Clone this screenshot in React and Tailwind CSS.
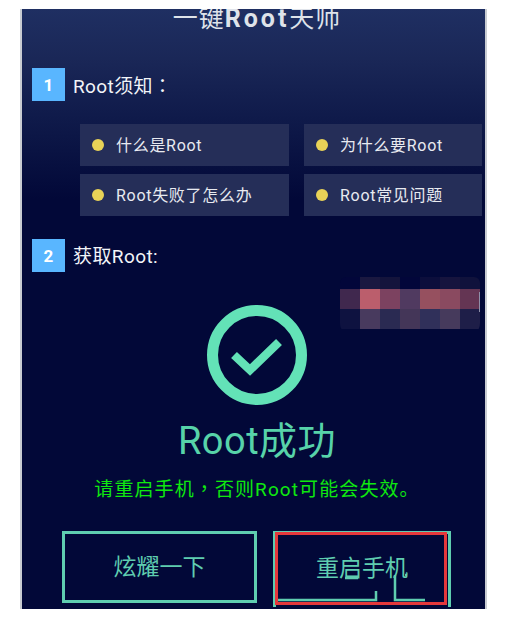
const font = { fontFamily: '"Roboto", "Noto Sans CJK SC", sans-serif' }

const questions = ["什么是Root", "为什么要Root", "Root失败了怎么办", "Root常见问题"]

const mosaic = [
  ["#02063a", "#1a1840", "#14143c", "#02063a", "#0c0e3c", "#16143e", "#10123c"],
  ["#40284e", "#bb5e6c", "#7c4260", "#503a60", "#96505f", "#8a4a60", "#643553"],
  ["#0e1240", "#483a5e", "#2a2a52", "#443658", "#30305a", "#463a5c", "#1e1e48"],
]

function Step({ n, children }) {
  return (
    <div className="flex items-center h-[33px]">
      <div className="w-[33px] h-[33px] pt-[3px] bg-[#59b6ff] text-white font-bold text-[17px] flex items-center justify-center">{n}</div>
      <div className="ml-[8px] pt-[3px] text-[19px] tracking-[0.4px] text-[#f2f4f8]">{children}</div>
    </div>
  )
}

export default function App() {
  return (
    <div className="w-[508px] h-[619px] bg-white pt-[9px] overflow-hidden" style={font}>
      <div className="relative ml-[20px] w-[467px] h-[600px] border-x-2 border-[#c9ccd2] overflow-hidden bg-[linear-gradient(#1f2f62_0px,#1a2757_50px,#0f1a4a_110px,#020838_190px,#020838_100%)]">
        {/* title is cut off by the top of the screen */}
        <div className="h-[19px] pl-[7px] flex items-end justify-center">
          <div className="text-[25px] leading-[36px] mb-[-9px] text-[#dfe3ea] tracking-[1px]">
            一键<span className="font-bold tracking-[3px]">Root</span>天师
          </div>
        </div>

        <div className="pl-[10px] pt-[40px]">
          <Step n="1">Root须知<span className="font-['Noto_Sans_CJK_TC']">：</span></Step>

          <div className="grid grid-cols-[209px_178px] gap-x-[15px] gap-y-[8px] ml-[48px] mt-[23px] w-[402px]">
            {questions.map((q) => (
              <div key={q} className="h-[42px] bg-[#252e58] flex items-center pl-[12px] text-[#e8eaf0] text-[16px] tracking-[0.7px]">
                <span className="w-[12px] h-[12px] rounded-full bg-[#e8d257] mr-[12px]" />
                <span className="mt-[2px]">{q}</span>
              </div>
            ))}
          </div>

          <div className="mt-[23px]">
            <Step n="2">获取Root:</Step>
          </div>
        </div>

        <div className="flex flex-col items-center mt-[33px] pl-[7px]">
          <svg width="100" height="100" viewBox="0 0 100 100" fill="none">
            <circle cx="50" cy="50" r="44.5" stroke="#63e2b7" strokeWidth="11" />
            <path d="M27 50 L43 65 L72 37" stroke="#63e2b7" strokeWidth="8.5" strokeLinejoin="miter" />
          </svg>
          <div className="text-[38px] leading-[46px] mt-[13px] tracking-[0.5px] text-[#57d3a9]">Root成功</div>
          <div className="text-[19px] leading-[28px] mt-[10px] tracking-[1.1px] text-[#0fe80f]">
            请重启手机<span className="font-['Noto_Sans_CJK_TC']">，</span>否则Root可能会失效。
          </div>
        </div>

        <div className="flex ml-[40px] mt-[27px]">
          <div className="w-[195px] h-[72px] pt-[3px] border-[3px] border-[#5fcdb0] flex items-center justify-center text-[23px] text-[#5fcdb0]">炫耀一下</div>
          <div className="ml-[16px] w-[178px] h-[76px] pb-[2px] border-x-[3px] border-t-[3px] border-[#5fcdb0] flex items-center justify-center text-[23px] text-[#5fcdb0]">重启手机</div>
        </div>

        {/* blurred-out patch */}
        <div className="absolute left-[318px] top-[268px] w-[140px] h-[60px] grid grid-cols-7 grid-rows-[12px_20px_20px] overflow-hidden rounded-b-[14px] rounded-t-[6px]">
          {mosaic.flat().map((c, i) => (
            <div key={i} style={{ backgroundColor: c }} />
          ))}
        </div>
        <div className="absolute left-[457px] top-[283px] w-px h-[20px] bg-[#8f8fa8]" />

        {/* scraps of the button outline left over from the edit */}
        <svg className="absolute left-[251px] top-[560px]" width="180" height="40" viewBox="0 0 180 40" fill="none" stroke="#5fcdb0" strokeWidth="2.5">
          <path d="M0 31 H103 V22" />
          <path d="M122 6 V31 H152" />
          <path d="M72 9 H85" />
          <path d="M132 6 h2" />
        </svg>

        {/* red annotation box */}
        <div className="absolute left-[253px] top-[523px] w-[172px] h-[73px] border-[3px] border-[#e5383b]" />
      </div>
    </div>
  )
}
